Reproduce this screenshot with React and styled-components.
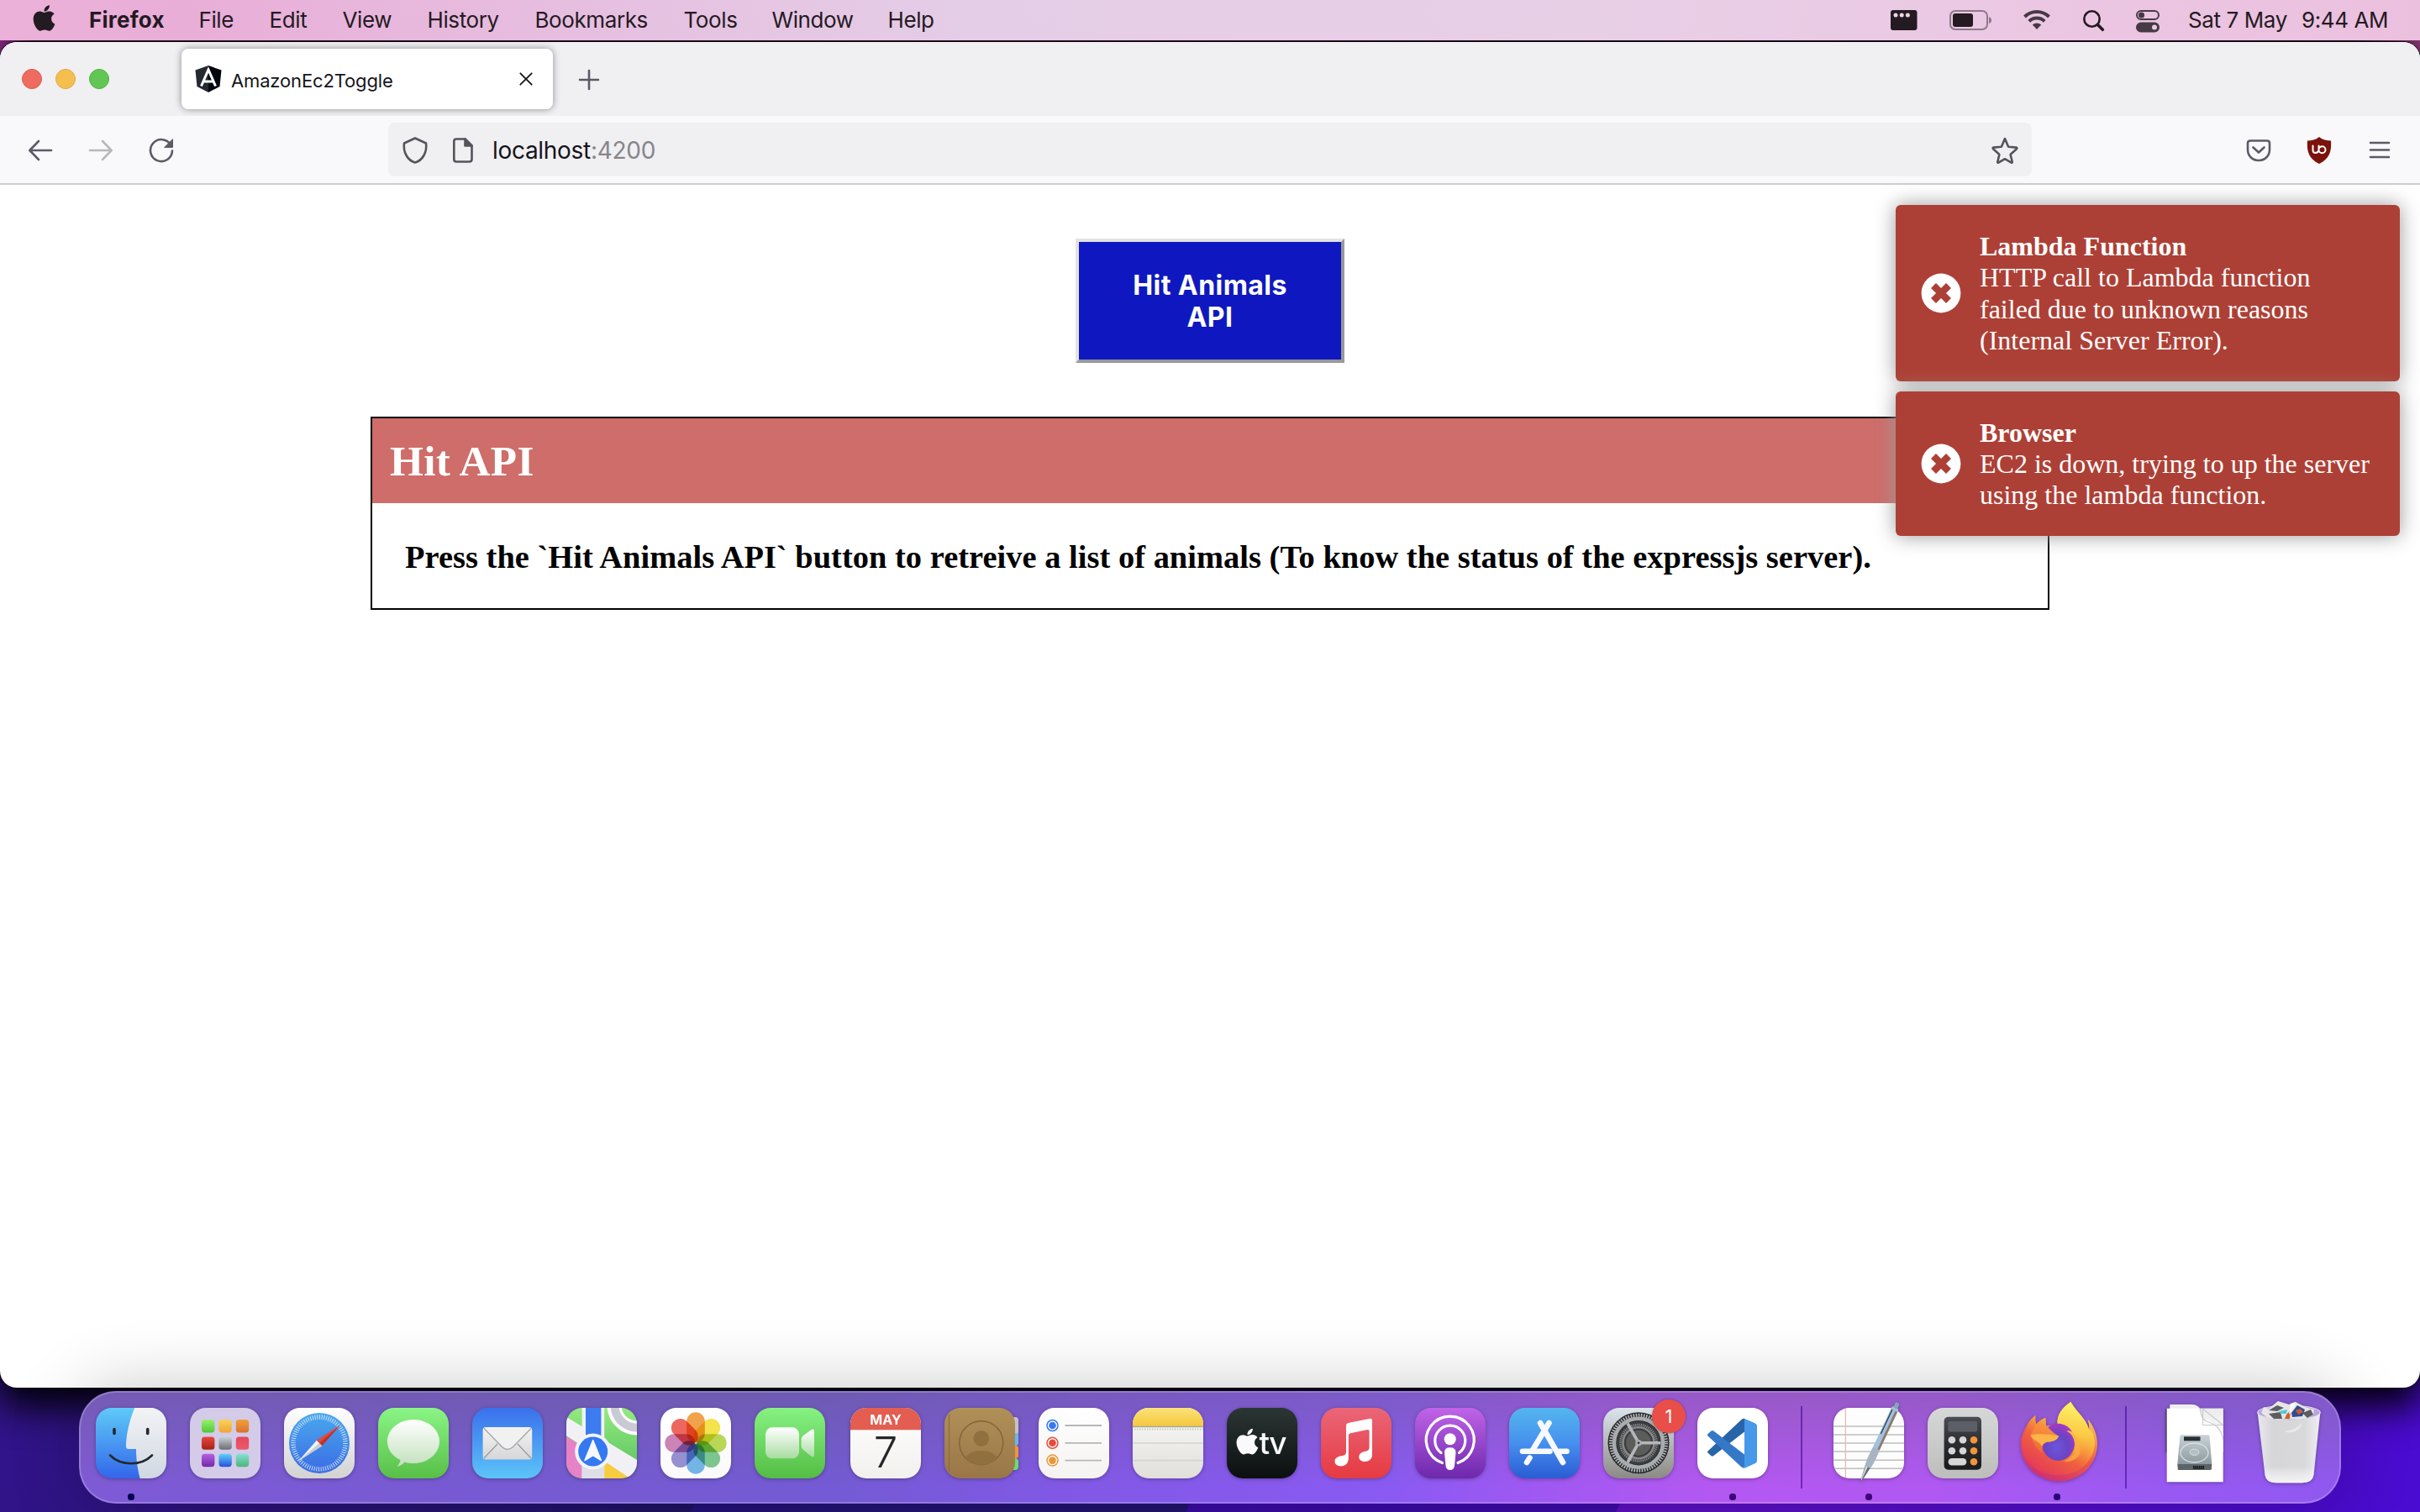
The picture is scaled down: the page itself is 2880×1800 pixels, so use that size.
import React from "react";
import styled, { createGlobalStyle } from "styled-components";
import { FaApple } from "react-icons/fa";

const SANS = `Inter, "Noto Sans", sans-serif`;
const SERIF = `"Liberation Serif", "Times New Roman", serif`;

const GlobalStyle = createGlobalStyle`
  * { box-sizing: border-box; }
  html, body { margin: 0; padding: 0; overflow: hidden; }
  svg { display: block; overflow: visible; flex: none; }
`;

const Desktop = styled.div`
  width: 2880px;
  height: 1800px;
  overflow: hidden;
  display: flex;
  flex-direction: column;
  font-family: ${SANS};
  background:
    linear-gradient(90deg, #8a2a84 0, #3a1030 40px, #2a0d25 2800px, #8d3c78 2880px) 0 0 / 100% 200px no-repeat,
    linear-gradient(118deg, #32148c 0, #1f1263 800px, #24127a 802px, #22136e 1320px, #3a0ba5 1322px, #3d0caa 1772px, #5f10c4 1774px, #4a0bcc 2500px, #4a0cd2 100%) 0 100% / 100% 160px no-repeat,
    #24127a;
`;

/* ---------- menu bar ---------- */

const MenuBar = styled.header`
  position: relative;
  z-index: 2;
  flex: none;
  height: 48px;
  margin-bottom: 2px;
  padding: 0 40px 0 39px;
  display: flex;
  align-items: center;
  justify-content: space-between;
  color: #241a22;
  background: linear-gradient(90deg, #ebb1d8 0, #e9aed8 220px, #e6bfe0 700px, #e4cde6 1150px, #e7cfe6 1900px, #ebc8e3 2350px, #ebc0de 2880px);
`;

const MenuGroup = styled.div`
  display: flex;
  align-items: center;
`;

const MenuItem = styled.span`
  width: ${(p) => p.$w}px;
  font-size: 26px;
  line-height: 46px;
  letter-spacing: ${(p) => (p.$bold ? 0.25 : -0.4)}px;
  font-weight: ${(p) => (p.$bold ? 700 : 400)};
  white-space: nowrap;
`;

const AppleMark = styled(FaApple)`
  width: 27px;
  height: 35px;
  margin: -5px 40px 0 0;
`;

const StatusIcon = styled.svg`
  width: ${(p) => p.$w}px;
  height: 48px;
  margin-right: ${(p) => p.$gap}px;
`;

/* ---------- browser ---------- */

const Window = styled.section`
  position: relative;
  flex: none;
  height: 1602px;
  display: flex;
  flex-direction: column;
  border-radius: 20px;
  background: #fff;
  box-shadow: 0 0 0 1px rgba(0, 0, 0, 0.75), 0 20px 44px 4px rgba(0, 0, 0, 0.95);
`;

const TabStrip = styled.div`
  flex: none;
  height: 88px;
  padding-left: 26px;
  display: flex;
  align-items: center;
  background: #f0eff2;
  border-radius: 20px 20px 0 0;
`;

const Lights = styled.div`
  display: flex;
  gap: 16px;
  margin-right: 86px;
`;

const Light = styled.i`
  width: 24px;
  height: 24px;
  border-radius: 50%;
  background: ${(p) => p.$fill};
  border: 1px solid ${(p) => p.$edge};
`;

const Tab = styled.div`
  width: 442px;
  height: 72px;
  padding: 0 24px 0 16px;
  display: flex;
  align-items: center;
  border-radius: 8px;
  background: #fff;
  box-shadow: 0 0 8px rgba(0, 0, 0, 0.42);
`;

const TabTitle = styled.span`
  flex: 1;
  margin: 4px 0 0 11px;
  font-size: 22px;
  letter-spacing: -0.15px;
  color: #15141a;
`;

const Icon = styled.svg`
  width: ${(p) => p.$size || 32}px;
  height: ${(p) => p.$size || 32}px;
  margin-left: ${(p) => p.$ml || 0}px;
  fill: none;
  stroke: ${(p) => p.$color || "#5b5b66"};
  stroke-width: ${(p) => p.$sw || 2.6};
  stroke-linecap: round;
  stroke-linejoin: round;
`;

const Toolbar = styled.nav`
  flex: none;
  height: 82px;
  padding: 0 32px;
  display: flex;
  align-items: center;
  background: #f9f9fb;
  border-bottom: 2px solid #cccccd;
`;

const NavButtons = styled.div`
  display: flex;
  gap: 40px;
  padding-top: 1px;
`;

const UrlBar = styled.div`
  width: 1956px;
  height: 64px;
  margin: 0 254px;
  padding: 1px 16px 0 16px;
  display: flex;
  align-items: center;
  border-radius: 8px;
  background: #f0eff2;
`;

const Url = styled.span`
  flex: 1;
  margin-left: 19px;
  padding-top: 1px;
  font-size: 28px;
  letter-spacing: -0.3px;
  color: #15141a;
  span { color: #86868a; }
`;

/* ---------- page ---------- */

const Page = styled.main`
  flex: 1;
  padding-top: 64px;
  display: flex;
  flex-direction: column;
  align-items: center;
  font-family: ${SERIF};
`;

const HitButton = styled.button`
  width: 320px;
  height: 148px;
  padding: 1px 50px 0;
  border: 4px solid;
  border-color: #e3e3e3 #999 #999 #e3e3e3;
  background: #0f18c0;
  color: #fff;
  font: 700 32px/38px ${SANS};
  letter-spacing: 0.45px;
`;

const Panel = styled.article`
  width: 1998px;
  height: 230px;
  margin-top: 64px;
  border: 2px solid #000;
`;

const PanelHead = styled.h2`
  margin: 0;
  height: 101px;
  padding-left: 21px;
  font-size: 51.2px;
  line-height: 101px;
  letter-spacing: 0.35px;
  color: #fff;
  background: #ce6d69;
`;

const PanelText = styled.h3`
  margin: 0;
  padding: 42px 0 0 39px;
  font-size: 38.4px;
  line-height: 44px;
  letter-spacing: 0.042px;
  color: #000;
  white-space: nowrap;
`;

const ToastStack = styled.aside`
  position: absolute;
  top: 194px;
  right: 24px;
  width: 600px;
  display: flex;
  flex-direction: column;
  gap: 12px;
`;

const Toast = styled.div`
  padding: 30px;
  display: flex;
  align-items: center;
  gap: 22px;
  border-radius: 6px;
  color: #fff;
  background: #ad4036;
  box-shadow: 0 0 24px #999;
  font: 32px/37.4px ${SERIF};
`;

const ToastBody = styled.div`
  margin: 1px 0 -1px;
  strong { display: block; }
`;

/* ---------- dock ---------- */

const Dock = styled.footer`
  position: relative;
  z-index: 2;
  flex: none;
  height: 134px;
  margin: 4px 94px 0;
  padding: 0 18px;
  display: flex;
  align-items: flex-start;
  gap: 28px;
  border: 2px solid rgba(255, 255, 255, 0.2);
  border-radius: 44px;
  background:
    linear-gradient(180deg, rgba(100, 92, 120, 0.36), rgba(100, 92, 140, 0) 85%),
    linear-gradient(90deg, #7f5ad6 0, #755ad2 560px, #745ad4 900px, #8258e6 1200px, #8a5af2 1560px, #a058f2 1740px, #b458f2 1950px, #b058f2 2200px, #9859f2 2480px, #9058f0 100%);
  background-origin: border-box;
  box-shadow: 0 0 84px rgba(0, 0, 0, 0.24);
`;

const DockItem = styled.div`
  position: relative;
  flex: none;
  width: 84px;
  margin-left: ${(p) => p.$nudge || 0}px;
  padding-top: 18px;
  display: flex;
  flex-direction: column;
  align-items: center;
`;

const DockGlyph = styled.svg`
  width: 84px;
  height: 84px;
  filter: drop-shadow(0 1px 2px rgba(0, 0, 0, 0.3));
`;

const RunningDot = styled.i`
  width: 8px;
  height: 8px;
  margin-top: 18px;
  border-radius: 3.5px;
  background: ${(p) => p.$color};
`;

const DockDivider = styled.i`
  flex: none;
  width: 2px;
  height: 98px;
  margin: 16px 9px 0 11px;
  background: rgba(70, 10, 150, 0.62);
`;

const Badge = styled.span`
  position: absolute;
  left: 58px;
  top: 8px;
  width: 40px;
  height: 40px;
  border-radius: 50%;
  background: #e94f48;
  box-shadow: 0 0 3px rgba(0, 0, 0, 0.35);
  color: #fff;
  font-size: 22px;
  line-height: 40px;
  text-align: center;
`;

const Grad = ({ id, from, to, mid }) => (
  <linearGradient id={id} x1="0" y1="0" x2="0" y2="1">
    <stop offset="0" stopColor={from} />
    {mid && <stop offset="0.5" stopColor={mid} />}
    <stop offset="1" stopColor={to} />
  </linearGradient>
);

const Tile = ({ id, from, to, mid }) => (
  <>
    <defs>
      <Grad id={id} from={from} to={to} mid={mid} />
      <clipPath id={`${id}Clip`}>
        <rect width="84" height="84" rx="19" />
      </clipPath>
    </defs>
    <rect width="84" height="84" rx="19" fill={`url(#${id})`} />
  </>
);

const Finder = () => (
  <>
    <Tile id="finder" from="#5fcaf8" to="#3366ea" />
    <defs><Grad id="finderR" from="#f3f3f5" to="#d0d8e2" /></defs>
    <path clipPath="url(#finderClip)" fill="url(#finderR)" d="M46.3 0C40 15 36 32 36 46Q36 49 39 49H48C48 62 50 74 52.7 84H84V0Z" />
    <g stroke="#23282e" strokeLinecap="round" fill="none">
      <path strokeWidth="3.6" d="M22 25.5V30.5M61.7 25.5V30.5" />
      <path strokeWidth="2.6" d="M17 56.5C30 69.5 54 69.5 67 56.5" />
    </g>
  </>
);

const PADS = [
  ["#9cf06e", "#4fc738"], ["#fad355", "#efa636"], ["#f0a03c", "#da7230"],
  ["#e8483c", "#a82016"], ["#c8d2dc", "#6c6c6c"], ["#e8455c", "#ea5a6c"],
  ["#b560e4", "#7428a8"], ["#5cd0fa", "#2a50dc"], ["#84e0d4", "#4eb478"],
];

const Launchpad = () => (
  <>
    <rect width="84" height="84" rx="19" fill="#d3cbe8" />
    {PADS.map(([a, b], i) => (
      <g key={i}>
        <defs><Grad id={`pad${i}`} from={a} to={b} /></defs>
        <rect x={14 + (i % 3) * 20.4} y={14 + Math.floor(i / 3) * 20.4} width="15.4" height="15.4" rx="3.6" fill={`url(#pad${i})`} />
      </g>
    ))}
  </>
);

const Safari = () => (
  <>
    <Tile id="safari" from="#ffffff" to="#d2d2d2" />
    <defs><Grad id="safariB" from="#4aa8ee" to="#3a6ce4" /></defs>
    <circle cx="42" cy="42" r="36" fill="url(#safariB)" />
    <circle cx="42" cy="42" r="31" fill="none" stroke="#e4eefb" strokeWidth="5.4" strokeDasharray="1 1.7" opacity="0.85" />
    <path d="M67.5 20L45.2 45.2L38.8 38.8Z" fill="#e04a40" />
    <path d="M17 63.5L38.8 38.8L45.2 45.2Z" fill="#f3f3f5" />
    <path d="M67.5 20L45.2 45.2L42 42Z" fill="#b8352e" />
    <path d="M17 63.5L45.2 45.2L42 42Z" fill="#c9ccd2" />
  </>
);

const Messages = () => (
  <>
    <Tile id="msg" from="#8af586" to="#58bf48" />
    <defs><Grad id="msgB" from="#ffffff" to="#c2e0bc" /></defs>
    <path fill="url(#msgB)" d="M42 14C59 14 73 25.5 73 40S59 66 42 66C38 66 34.5 65.5 31.5 64.5C29 67.5 26 69.3 22.6 69.7C25 67 26.2 64.5 26.4 62C17 57.5 11 49.5 11 40C11 25.5 25 14 42 14Z" />
  </>
);

const Mail = () => (
  <>
    <Tile id="mail" from="#3a70ec" to="#5cc4f8" />
    <defs><Grad id="mailE" from="#f4f4f4" to="#d6d6d8" /></defs>
    <rect x="12.6" y="23" width="58.6" height="38.4" rx="3.5" fill="url(#mailE)" />
    <path d="M14 60L30 43M70 60L54 43" stroke="#9a9a9c" strokeWidth="1.2" fill="none" />
    <path d="M14 24.5L35 46Q42 53 49 46L70 24.5" fill="#f1f1f2" stroke="#a8a8aa" strokeWidth="1.4" />
  </>
);

const Maps = () => (
  <>
    <Tile id="maps" from="#94ea80" to="#56c05c" />
    <g clipPath="url(#mapsClip)">
      <path d="M0 34L45 62V84H0Z" fill="#e583c6" />
      <path d="M45 56L84 84H45Z" fill="#f8cc40" />
      <circle cx="84" cy="-3" r="27" fill="none" stroke="#fff" strokeWidth="17" />
      <circle cx="84" cy="-3" r="26.5" fill="none" stroke="#c9cad4" strokeWidth="10" />
      <path d="M0 10.7L84 62V84H76L0 33Z" fill="#f1f1f5" />
      <rect x="18.6" width="26.6" height="84" fill="#f1f1f5" />
      <rect x="23" width="18.4" height="36" fill="#3c7cf0" />
      <path d="M18.6 62H45V84H18.6Z" fill="#dedfe6" />
      <circle cx="31.7" cy="52" r="21.5" fill="#f2f3f6" />
      <circle cx="31.7" cy="52" r="17.5" fill="#3478f2" />
      <path d="M31.7 38.5L22 62.5L31.7 56.5L41.4 62.5Z" fill="#f6f7fa" stroke="#f6f7fa" strokeWidth="1.5" strokeLinejoin="round" />
    </g>
  </>
);

const PETALS = ["#f09a3a", "#f2e13c", "#b4d348", "#72c086", "#68aee2", "#8c86cc", "#c878b0", "#ec5a50"];

const PetalGroup = styled.g`
  isolation: isolate;
  rect { mix-blend-mode: multiply; }
`;

const Photos = () => (
  <>
    <Tile id="photos" from="#ffffff" to="#fafafa" />
    <PetalGroup>
      {PETALS.map((c, i) => (
        <rect key={c} x="31.2" y="5.3" width="21.6" height="36" rx="10.8" fill={c} opacity="0.92" transform={`rotate(${i * 45} 42 42)`} />
      ))}
    </PetalGroup>
  </>
);

const FaceTime = () => (
  <>
    <Tile id="ft" from="#86f282" to="#54bd44" />
    <defs><Grad id="ftC" from="#ffffff" to="#a8dca0" /></defs>
    <rect x="13" y="23.3" width="40" height="37" rx="8" fill="url(#ftC)" />
    <path fill="url(#ftC)" d="M55.6 37.5Q55.6 35 57.5 33.3L67 26.5Q71 24 71 28V56Q71 60 67 57.5L57.5 49.5Q55.6 48 55.6 45.5Z" />
  </>
);

const Calendar = () => (
  <>
    <Tile id="cal" from="#ffffff" to="#f1f0ed" />
    <path clipPath="url(#calClip)" d="M0 0H84V26.3H0Z" fill="#e35d51" />
    <text x="42" y="20" fontFamily={SANS} fontSize="16" fontWeight="700" fill="#fff" textAnchor="middle">MAY</text>
    <text x="42" y="71" fontFamily={SANS} fontSize="51" fontWeight="300" fill="#26262a" textAnchor="middle">7</text>
  </>
);

const Contacts = () => (
  <>
    <g>
      <rect x="74" y="11" width="14" height="22" rx="4" fill="#c3c3c5" />
      <rect x="74" y="30" width="14" height="15" rx="3" fill="#68b8ec" />
      <rect x="74" y="45" width="14" height="15" rx="3" fill="#f0943a" />
      <rect x="74" y="60" width="14" height="14" rx="4" fill="#6cdc6c" />
    </g>
    <Tile id="con" from="#b09058" to="#9a7647" />
    <path d="M5.5 8V76" stroke="#8d6c3e" strokeWidth="1.2" />
    <g fill="#90703f" stroke="#836336">
      <circle cx="43.8" cy="41.7" r="26" fill="none" strokeWidth="1.4" />
      <ellipse cx="43.8" cy="36.5" rx="9.3" ry="9.6" stroke="none" />
      <path stroke="none" d="M25 60C29 48 58.6 48 62.6 60C53 70.5 34.6 70.5 25 60Z" />
    </g>
  </>
);

const Reminders = () => (
  <>
    <Tile id="rem" from="#ffffff" to="#f4f3f1" />
    {["#3478f2", "#e64c3c", "#ec9636"].map((c, i) => (
      <g key={c} transform={`translate(0 ${21 + i * 20.8})`}>
        <circle cx="16.5" r="6.5" fill="none" stroke={c} strokeWidth="1.5" />
        <circle cx="16.5" r="4.3" fill={c} />
        <path d="M31.5 0H75" stroke="#b6b6b9" strokeWidth="1.8" />
      </g>
    ))}
  </>
);

const Notes = () => (
  <>
    <Tile id="notes" from="#fafafa" to="#e0dfda" />
    <defs><Grad id="notesY" from="#fbe27a" to="#f5c83c" /></defs>
    <g clipPath="url(#notesClip)">
      <rect width="84" height="22" fill="url(#notesY)" />
      <path d="M0 22.5H84" stroke="#a9a79f" strokeWidth="1.5" />
      <path d="M2 25.5H84" stroke="#bcbcbc" strokeWidth="1.5" strokeDasharray="1.4 1.6" />
      <path d="M0 42H84M0 62.7H84" stroke="#d3d3d3" strokeWidth="1.7" />
    </g>
  </>
);

const AppleTv = () => (
  <>
    <Tile id="tv" from="#2b3634" to="#0c0f10" />
    <g transform="translate(6.9 22.6)" color="#fafafa">
      <FaApple size={35} />
    </g>
    <text x="38.5" y="55" fontFamily={SANS} fontSize="37" fontWeight="500" fill="#fafafa" textLength="33">tv</text>
  </>
);

const Music = () => (
  <>
    <Tile id="music" from="#ea6678" to="#e63a42" />
    <path fill="#fff" d="M30 21Q30 18.5 32.5 18L58.5 12.8Q61 12.3 61 14.8V56C61 61 57 64 52 64C48 64 45.3 61.5 45.3 58.5C45.3 54.5 48.5 52.5 53 51.7Q57.6 51 57.6 47.5V28Q57.6 25.6 55.5 26L35 30.2Q32.8 30.7 32.8 33V60C32.8 66 29 69.5 24 69.5C19.5 69.5 16.5 67 16.5 63.8C16.5 60 19.5 58 24.5 57.2Q30 56.5 30 53Z" />
  </>
);

const Podcasts = () => (
  <>
    <Tile id="pod" from="#c064e8" to="#6d28ac" />
    <g fill="none" stroke="#fff" strokeWidth="3.2" strokeLinecap="round">
      <path d="M32.5 65.5A28.5 28.5 0 1 1 51 65.5" />
      <path d="M31 53.5A18 18 0 1 1 52.5 53.5" />
    </g>
    <circle cx="41.7" cy="37.3" r="7" fill="#fff" />
    <path fill="#fff" d="M35 53Q35 47.3 41.7 47.3T48.5 53L47 69Q46.3 74 41.7 74T36.5 69Z" />
  </>
);

const AppStore = () => (
  <>
    <Tile id="store" from="#54b6ee" mid="#4690ee" to="#2a5cd4" />
    <g stroke="#f6f9fe" strokeWidth="6.6" strokeLinecap="round">
      <path d="M37 18L64 65" />
      <path d="M47.5 18L27.5 51" />
      <path d="M24.5 59.5L21 65" />
      <path d="M16 51.7H48.5M60 51.7H68.5" />
    </g>
  </>
);

const Settings = () => (
  <>
    <Tile id="prefs" from="#dbe4ec" to="#8c8a86" />
    <circle cx="42" cy="41.7" r="36.5" fill="#26282a" />
    <circle cx="42" cy="41.7" r="33" fill="none" stroke="#b9bcbe" strokeWidth="4" strokeDasharray="1.6 1.5" />
    <circle cx="42" cy="41.7" r="29" fill="none" stroke="#a9acae" strokeWidth="4.6" />
    <circle cx="42" cy="41.7" r="26" fill="#3a3c3e" />
    <circle cx="42" cy="41.7" r="21.5" fill="none" stroke="#8b8d8f" strokeWidth="3" strokeDasharray="1.2 1.1" />
    <circle cx="42" cy="41.7" r="18.5" fill="none" stroke="#85878a" strokeWidth="2.6" />
    <circle cx="42" cy="41.7" r="15" fill="#5c5c5a" />
    <path d="M42 41.7H68.5M42 41.7L29 18.5M42 41.7L29 65" stroke="#b4b7ba" strokeWidth="3.6" />
    <circle cx="42" cy="41.7" r="3.8" fill="#aaaeb0" />
    <circle cx="42" cy="41.7" r="1.3" fill="#2c2c2c" />
  </>
);

const VsCode = () => (
  <>
    <rect width="84" height="84" rx="19" fill="#fff" />
    <path d="M12.5 51.5Q11.5 52.5 12.5 53.5L16.5 57.2Q18 58 19.3 57L56 28.5V12.7Q54 12.5 52.5 14Z" fill="#2764a8" />
    <path d="M12.5 33.5Q11.5 32.2 12.5 31L16.5 27.5Q18 26.5 19.3 27.5L56 55.5V71.5Q54 71.7 52.5 70.5Z" fill="#3578c8" />
    <path d="M56 12.7L69 18.5Q71 19.6 71 21.5V63Q71 65 69 66L57.5 71.3Q56 72 54 71.3Q56 70 56 68Z" fill="#4798e8" />
  </>
);

const TextEdit = () => (
  <>
    <rect width="84" height="84" rx="19" fill="#fdfdfd" />
    <path d="M0 22H84M0 32H84M0 42H84M0 52H84M0 62.3H84M1 72.3H83" stroke="#bebebe" strokeWidth="1.4" />
    <path d="M14.4 1V83" stroke="#efb4b4" strokeWidth="1.2" />
    <g transform="translate(32.3 88.3) rotate(25.1)">
      <path d="M0 0L-1.2 -4L-3.4 -21H3.4L1.2 -4Z" fill="#6a7078" />
      <path d="M0 -2L-1 -4L-2.6 -21H0Z" fill="#d5dbe1" />
      <path d="M-3.6 -20Q-5 -28 -4.3 -40V-96Q-4.3 -98 -2.3 -98H2.3Q4.3 -98 4.3 -96V-40Q5 -28 3.6 -20Z" fill="#a3c0dc" />
      <path d="M-3.6 -20Q-5 -28 -4.3 -44H4.3Q5 -28 3.6 -20Z" fill="#a9b4c2" />
      <path d="M1.6 -94V-44H4.3V-94Z" fill="#8c7a68" />
      <path d="M-2.5 -94V-62" stroke="#23354a" strokeWidth="1.2" />
      <rect x="-2.6" y="-104" width="5.2" height="7" rx="1.5" fill="#88a4b8" />
    </g>
  </>
);

const Calculator = () => (
  <>
    <Tile id="calc" from="#d6d8d8" to="#bdbdbb" />
    <defs><Grad id="calcB" from="#4a4d54" mid="#2c2d30" to="#1b1b1d" /></defs>
    <rect x="19.6" y="10.7" width="44.4" height="63" rx="5" fill="url(#calcB)" />
    <rect x="24.5" y="16" width="34.5" height="12.5" rx="2" fill="#5c6066" />
    {[38.3, 51.3, 64.3].map((y) => (
      <g key={y}>
        {y < 60 ? (
          <>
            <circle cx="28.9" cy={y} r="4.3" fill="#d6d6d6" />
            <circle cx="42" cy={y} r="4.3" fill="#d6d6d6" />
          </>
        ) : (
          <rect x="24.6" y={y - 4.3} width="21.7" height="8.6" rx="4.3" fill="#d6d6d6" />
        )}
        <circle cx="55" cy={y} r="4.3" fill="#f0953a" />
      </g>
    ))}
  </>
);

const Firefox = () => (
  <>
    <defs>
      <linearGradient id="ffBody" x1="0.8" y1="0.1" x2="0.25" y2="0.95">
        <stop offset="0" stopColor="#fdf05e" />
        <stop offset="0.35" stopColor="#f9b23e" />
        <stop offset="0.65" stopColor="#f0603e" />
        <stop offset="1" stopColor="#e63c58" />
      </linearGradient>
      <linearGradient id="ffRim" x1="0.8" y1="0" x2="0.3" y2="1">
        <stop offset="0" stopColor="#fbe95a" />
        <stop offset="0.55" stopColor="#ee5a48" />
        <stop offset="1" stopColor="#cc2e74" />
      </linearGradient>
      <radialGradient id="ffGlobe" cx="0.45" cy="0.65" r="0.65">
        <stop offset="0" stopColor="#6a56dc" />
        <stop offset="0.55" stopColor="#6a44c4" />
        <stop offset="1" stopColor="#a838c4" />
      </radialGradient>
      <linearGradient id="ffHead" x1="0.6" y1="0" x2="0.3" y2="1">
        <stop offset="0" stopColor="#f8963c" />
        <stop offset="1" stopColor="#ee683e" />
      </linearGradient>
      <linearGradient id="ffFlame" x1="0.5" y1="0" x2="0.4" y2="1">
        <stop offset="0" stopColor="#fdf468" />
        <stop offset="0.55" stopColor="#fbc844" />
        <stop offset="1" stopColor="#f4703c" />
      </linearGradient>
    </defs>
    <path fill="url(#ffRim)" d="M16.5 9C10 14 7.5 18 6 21.5C1 29 -1.4 36 -1.4 43C-1.4 68 19 87.5 44.4 87.5C70 87.5 90 67.5 90 42.5C90 32 85 20 78.3 13.3C80 18 80.5 22 80 25.5C76 12 66 6 58.3 -7C48 0 42 8 42.6 19L29 22L28.3 11.7C23 14 19 16.5 17.6 19.5C16 16 16 12 16.5 9Z" />
    <path fill="url(#ffBody)" d="M16.5 9C10 14 7.5 18 6 21.5C0 34 -1 46 3 56C10 72 26 80 44 80C68 80 86 64 87 42C87 36 84 26 80 25.5C76 12 66 6 58.3 -7C48 0 42 8 42.6 19L29 22L28.3 11.7C23 14 19 16.5 17.6 19.5C16 16 16 12 16.5 9Z" />
    <ellipse cx="43.5" cy="40.7" rx="19.8" ry="22.3" fill="url(#ffGlobe)" />
    <path fill="url(#ffFlame)" d="M58.3 -7C48 0 42 8 42.6 18.5C51 19 58 23 61 30C60 28 56 26.5 53.5 27.5C60 31 63.5 37 63 45C62 56 54 62 46 63C62 66 78 56 81 40C82 24 72 12 66 6C62 2 59 -2 58.3 -7Z" />
    <path fill="#fbb040" opacity="0.7" d="M53.5 27.5C66 30 72 42 69 54C66 62 58 65 50 64C60 60 64 54 63.3 44C62.7 36 59 30 53.5 27.5Z" />
    <path fill="url(#ffHead)" d="M29 20.5C33 25 36 29 44 33.5C43 38 37 40.5 31 40.5C25 42 23 48 24.5 54C18 50 14 42 10.4 33L17 19Z" />
    <path fill="#fbb548" d="M10.4 32.5C18 30.5 30 31 44 33.5C43 38 37 40.5 31 40.5C27 41 25 43 24 46C22 40 14 40 10.4 32.5Z" />
  </>
);

const DriveDocument = () => (
  <>
    <defs>
      <Grad id="drive" from="#c9d3d8" to="#8d999e" />
      <Grad id="fold" from="#e9e9ea" to="#ffffff" />
    </defs>
    <path d="M9.3 1H14V53H9.3Z" fill="#4a4054" />
    <path d="M14.3 -4H40Q46 -4 50 0.7H77.7V53H14Z" fill="#efeff0" />
    <path d="M10.7 0.7H50L53 6L77.7 30V88.3H10.7Z" fill="#fff" />
    <path d="M42 -4C54 -2 52 10 56 14C66 14 76 22 77.7 40V0.7H50Z" fill="url(#fold)" />
    <path d="M53.5 1V20.5H77.7M53.5 1L77.7 20.5M50 1C52 10 53 14 58 16C68 19 76 26 77.7 38" fill="none" stroke="#c9c9cc" strokeWidth="1.2" />
    <path d="M26.5 33Q26.6 32.3 27.5 32.3H60.5Q61.3 32.3 61.5 33L64.3 67H23.3Z" fill="url(#drive)" />
    <path d="M23.3 67H64.3L63.8 73Q63.6 74 62.5 74H25Q24 74 23.8 73Z" fill="#5d6468" />
    <path d="M42 71H55" stroke="#15181a" strokeWidth="4" strokeDasharray="1.6 0.7" />
    <rect x="31" y="34.3" width="19.5" height="5" fill="#2b2f33" />
    <ellipse cx="43.5" cy="53.5" rx="16.5" ry="11.3" fill="none" stroke="#dbe3e6" strokeWidth="1.2" />
    <ellipse cx="43.5" cy="52.8" rx="5.4" ry="3.7" fill="#b5c0c5" stroke="#d9e1e4" />
  </>
);

const Trash = () => (
  <>
    <defs>
      <linearGradient id="bin" x1="0" y1="0" x2="1" y2="0">
        <stop offset="0" stopColor="#e9e8ee" />
        <stop offset="0.25" stopColor="#d6d5d8" />
        <stop offset="0.75" stopColor="#d9d8db" />
        <stop offset="1" stopColor="#efeef3" />
      </linearGradient>
      <Grad id="binFoot" from="rgba(255,255,255,0)" to="#f3f3f5" />
    </defs>
    <ellipse cx="44" cy="5.5" rx="37.3" ry="8.5" fill="#b9a4e0" stroke="#e6def6" strokeWidth="1.2" />
    <path d="M11 6L14 -1L20 1L31 -8L44 -4L52 -7L63 -1L74 2L73 8L66 13H20Z" fill="#e6e6e6" />
    <path d="M20 3L30 -3L38 0L30 4ZM20 7L34 5L36 13H26ZM60 6L70 2L73 8L66 12Z" fill="#5e5e60" />
    <path d="M47 6L54 -3L63 2L60 10L48 11Z" fill="#2e4c94" />
    <path d="M52 3L58 1L61 5L55 8Z" fill="#cc5c2c" />
    <path d="M32 4L42 2L41 7L34 7Z" fill="#58c8d8" />
    <path d="M41 8L46 3L45 13H39Z" fill="#c8642c" />
    <path d="M46 -5L52 -7L50 0L44 8Z" fill="#fafafa" />
    <path d="M6.7 5.5C10 17 78 17 81.3 5.5L73.5 80Q72 89 60 89.3H28Q17 89 15.5 80Z" fill="url(#bin)" />
    <path d="M38 28C50 27 56 22 60 17C58 26 50 32 38 28Z" fill="#ededf0" opacity="0.8" />
    <path d="M14.5 70H74.5L73.5 80Q72 89 60 89.3H28Q17 89 15.5 80Z" fill="url(#binFoot)" />
  </>
);

const DOCK = [
  { Art: Finder, dot: "#070053" }, { Art: Launchpad }, { Art: Safari }, { Art: Messages }, { Art: Mail },
  { Art: Maps }, { Art: Photos }, { Art: FaceTime }, { Art: Calendar, nudge: 2 }, { Art: Contacts },
  { Art: Reminders }, { Art: Notes }, { Art: AppleTv }, { Art: Music }, { Art: Podcasts },
  { Art: AppStore }, { Art: Settings, badge: "1" }, { Art: VsCode, dot: "#3c0078" },
  null,
  { Art: TextEdit, dot: "#3c0078" }, { Art: Calculator }, { Art: Firefox, dot: "#2a0078" },
  null,
  { Art: DriveDocument }, { Art: Trash },
];

const MENUS = [
  ["Firefox", 130.5, true], ["File", 84], ["Edit", 87], ["View", 101], ["History", 128],
  ["Bookmarks", 177], ["Tools", 105], ["Window", 138], ["Help", 60],
];

const TOASTS = [
  ["Lambda Function", "HTTP call to Lambda function failed due to unknown reasons (Internal Server Error)."],
  ["Browser", "EC2 is down, trying to up the server using the lambda function."],
];

const SystemMenuBar = () => (
  <MenuBar>
    <MenuGroup>
      <AppleMark />
      {MENUS.map(([name, w, bold]) => (
        <MenuItem key={name} $w={w} $bold={bold}>{name}</MenuItem>
      ))}
    </MenuGroup>
    <MenuGroup>
      <StatusIcon $w={32} $gap={38} viewBox="0 0 32 48" fill="#241a22">
        <rect y="12" width="31.5" height="24" rx="3" />
        <g fill="#ecd4e6">
          <circle cx="6" cy="18" r="2.5" /><circle cx="13.2" cy="18" r="2.5" /><circle cx="20.4" cy="18" r="2.5" />
        </g>
      </StatusIcon>
      <StatusIcon $w={50} $gap={38} viewBox="0 0 50 48">
        <rect x="1" y="13" width="44" height="22" rx="6" fill="none" stroke="#8d7a89" strokeWidth="2" />
        <rect x="4" y="16" width="24" height="16" rx="3" fill="#241a22" />
        <path d="M47 20Q50 21 50 24T47 28Z" fill="#8d7a89" />
      </StatusIcon>
      <StatusIcon $w={32} $gap={39} viewBox="0 0 32 48" fill="none" stroke="#463a44" strokeWidth="4">
        <path d="M1.5 20A20.5 20.5 0 0 1 30.5 20" />
        <path d="M6.8 25.4A13 13 0 0 1 25.2 25.4" />
        <path d="M16 35L10.8 29.6A7.5 7.5 0 0 1 21.2 29.6Z" fill="#463a44" stroke="none" />
      </StatusIcon>
      <StatusIcon $w={25} $gap={38} viewBox="0 0 25 48" fill="none" stroke="#241a22">
        <circle cx="10.5" cy="22.5" r="9.2" strokeWidth="2.6" />
        <path d="M17.5 29.5L23.3 35.3" strokeWidth="3.6" strokeLinecap="round" />
      </StatusIcon>
      <StatusIcon $w={28} $gap={34} viewBox="0 0 28 48" stroke="#463a44" strokeWidth="2" fill="none">
        <rect x="1" y="13" width="26" height="10" rx="5" />
        <circle cx="6.5" cy="18" r="2.6" fill="#463a44" />
        <rect x="1" y="27.500" width="26" height="10" rx="5" fill="#463a44" />
        <circle cx="22" cy="32.5" r="3" fill="#ecc8e2" stroke="none" />
      </StatusIcon>
      <MenuItem $w={135}>Sat 7 May</MenuItem>
      <MenuItem $w={101}>9:44 AM</MenuItem>
    </MenuGroup>
  </MenuBar>
);

const Tabs = () => (
  <TabStrip>
    <Lights>
      <Light $fill="#ed6b5f" $edge="#dc5a4e" />
      <Light $fill="#f5bf4f" $edge="#e0a83c" />
      <Light $fill="#62c655" $edge="#50b043" />
    </Lights>
    <Tab>
      <Icon viewBox="0 0 32 32">
        <path d="M16 0L31.500 5.500L29.500 25L16 32Z" fill="#03060f" stroke="none" />
        <path d="M16 0L0.500 5.500L2.500 25L16 32Z" fill="#262932" stroke="none" />
        <path d="M7.500 24.500L16 5L24.500 24.500M11 19H21" stroke="#fff" strokeWidth="3" strokeLinecap="butt" strokeLinejoin="miter" />
      </Icon>
      <TabTitle>AmazonEc2Toggle</TabTitle>
      <Icon $size={16} $color="#15141a" $sw={1.8} viewBox="0 0 16 16"><path d="M1.300 1.300L14.700 14.700M14.700 1.300L1.300 14.700" /></Icon>
    </Tab>
    <Icon $ml={27} viewBox="0 0 32 32"><path d="M16 6V28M5 17H27" /></Icon>
  </TabStrip>
);

const NavigationBar = () => (
  <Toolbar>
    <NavButtons>
      <Icon viewBox="0 0 32 32"><path d="M29 16H3.500M14 5L3.300 16L14 27" /></Icon>
      <Icon $color="#b8b8bd" viewBox="0 0 32 32"><path d="M3 16H28.500M18 5L28.700 16L18 27" /></Icon>
      <Icon viewBox="0 0 32 32">
        <path d="M27.500 10A13 13 0 1 0 29 16.500" />
        <path d="M29.500 3V12.500H20Z" fill="#5b5b66" strokeWidth="1" />
      </Icon>
    </NavButtons>
    <UrlBar>
      <Icon $color="#54545c" viewBox="0 0 32 32"><path d="M16 1.500L29 7.500C30.500 18 25 28 16 30.500C7 28 1.500 18 3 7.500Z" /></Icon>
      <Icon $ml={25} $color="#54545c" viewBox="0 0 32 32">
        <path d="M8 2.500H18.500L26.500 10.500V26.500Q26.500 29.500 23.500 29.500H8Q5.300 29.500 5.300 26.500V5.200Q5.300 2.500 8 2.500Z" />
        <path d="M18.500 2.500V10.500H26.500Z" fill="#54545c" />
      </Icon>
      <Url>localhost<span>:4200</span></Url>
      <Icon $color="#54545c" viewBox="0 0 32 32">
        <path d="M16 2L19.900 11.200Q20.100 11.700 20.700 11.800L29.500 12.600Q31 13 30 14.200L23 20.500Q22.600 20.900 22.700 21.400L24.800 30Q24.800 31 23.700 30.600L16 26.200L8.300 30.600Q7.200 31 7.200 30L9.300 21.400Q9.400 20.900 9 20.500L2 14.200Q1 13 2.500 12.600L11.300 11.800Q11.900 11.700 12.100 11.200Z" />
      </Icon>
    </UrlBar>
    <NavButtons>
      <Icon viewBox="0 0 32 32">
        <path d="M6 4.500H26Q29 4.500 29 7.500V15C29 23 23 28 16 28S3 23 3 15V7.500Q3 4.500 6 4.500Z" />
        <path d="M9.500 12.500L16 18.500L22.500 12.500" />
      </Icon>
      <Icon viewBox="0 0 32 32">
        <path d="M16 0C20 3.500 25 4.500 30 4.500C31 18 28 26 16 32C4 26 1 18 2 4.500C7 4.500 12 3.500 16 0Z" fill="#7b120c" stroke="none" />
        <path d="M8.500 10.500V15.500Q8.500 19 11.700 19T15.500 15.500V10.500M15.500 15.200A4 4 0 1 0 19.500 11.200Q17 11.200 15.500 14" stroke="#fff" strokeWidth="2" />
      </Icon>
      <Icon viewBox="0 0 32 32"><path d="M5 7H27M5 15.500H27M5 24H27" /></Icon>
    </NavButtons>
  </Toolbar>
);

const Notification = ({ title, children }) => (
  <Toast>
    <svg width="48" height="48" viewBox="0 0 48 48">
      <circle cx="24" cy="24" r="23.400" fill="#fff" />
      <path d="M15 15L33 33M33 15L15 33" stroke="#ad4036" strokeWidth="8.400" strokeLinecap="butt" />
    </svg>
    <ToastBody>
      <strong>{title}</strong>
      {children}
    </ToastBody>
  </Toast>
);

export default function App() {
  return (
    <>
      <GlobalStyle />
      <Desktop>
        <SystemMenuBar />
        <Window>
          <Tabs />
          <NavigationBar />
          <Page>
            <HitButton>Hit Animals API</HitButton>
            <Panel>
              <PanelHead>Hit API</PanelHead>
              <PanelText>
                Press the `Hit Animals API` button to retreive a list of animals (To know the status of the expressjs server).
              </PanelText>
            </Panel>
          </Page>
          <ToastStack>
            {TOASTS.map(([title, text]) => (
              <Notification key={title} title={title}>{text}</Notification>
            ))}
          </ToastStack>
        </Window>
        <Dock>
          {DOCK.map((item, i) =>
            item ? (
              <DockItem key={i} $nudge={item.nudge}>
                <DockGlyph viewBox="0 0 84 84"><item.Art /></DockGlyph>
                {item.badge && <Badge>{item.badge}</Badge>}
                {item.dot && <RunningDot $color={item.dot} />}
              </DockItem>
            ) : (
              <DockDivider key={i} />
            )
          )}
        </Dock>
      </Desktop>
    </>
  );
}
